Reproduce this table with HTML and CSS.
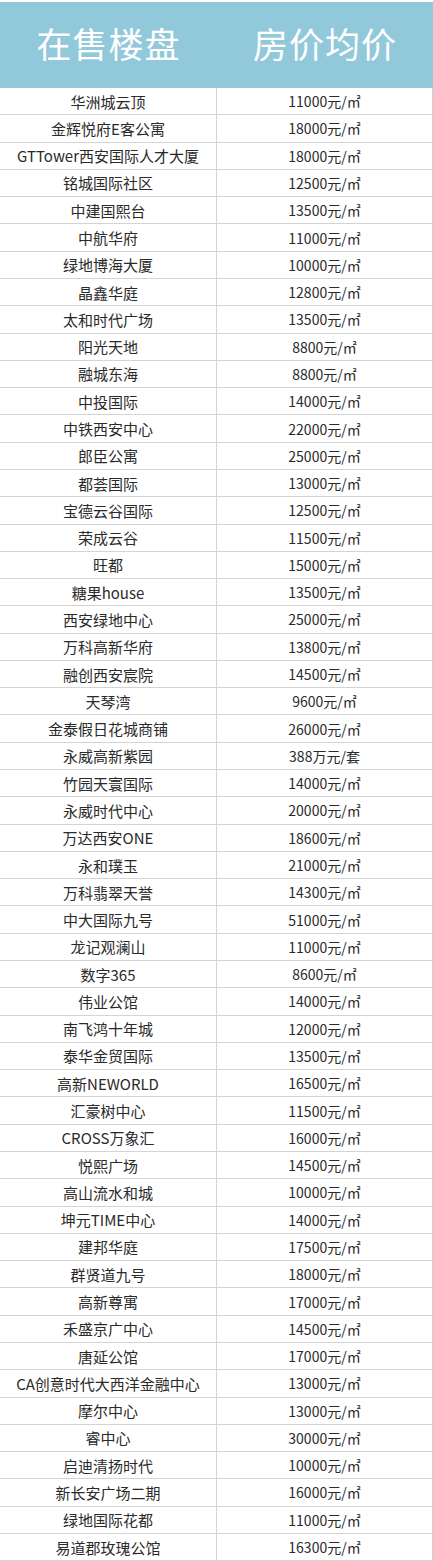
FILE: index.html
```html
<!DOCTYPE html>
<html lang="zh-CN">
<head>
<meta charset="utf-8">
<title>在售楼盘 房价均价</title>
<link rel="stylesheet" href="styles.css">
</head>
<body>
<div class="sheet">
  <div class="head">
    <div class="hcell">在售楼盘</div>
    <div class="hcell">房价均价</div>
  </div>
  <div class="rows">
    <div class="row"><div class="name">华洲城云顶</div><div class="price">11000元/㎡</div></div>
    <div class="row"><div class="name">金辉悦府E客公寓</div><div class="price">18000元/㎡</div></div>
    <div class="row"><div class="name">GTTower西安国际人才大厦</div><div class="price">18000元/㎡</div></div>
    <div class="row"><div class="name">铭城国际社区</div><div class="price">12500元/㎡</div></div>
    <div class="row"><div class="name">中建国熙台</div><div class="price">13500元/㎡</div></div>
    <div class="row"><div class="name">中航华府</div><div class="price">11000元/㎡</div></div>
    <div class="row"><div class="name">绿地博海大厦</div><div class="price">10000元/㎡</div></div>
    <div class="row"><div class="name">晶鑫华庭</div><div class="price">12800元/㎡</div></div>
    <div class="row"><div class="name">太和时代广场</div><div class="price">13500元/㎡</div></div>
    <div class="row"><div class="name">阳光天地</div><div class="price">8800元/㎡</div></div>
    <div class="row"><div class="name">融城东海</div><div class="price">8800元/㎡</div></div>
    <div class="row"><div class="name">中投国际</div><div class="price">14000元/㎡</div></div>
    <div class="row"><div class="name">中铁西安中心</div><div class="price">22000元/㎡</div></div>
    <div class="row"><div class="name">郎臣公寓</div><div class="price">25000元/㎡</div></div>
    <div class="row"><div class="name">都荟国际</div><div class="price">13000元/㎡</div></div>
    <div class="row"><div class="name">宝德云谷国际</div><div class="price">12500元/㎡</div></div>
    <div class="row"><div class="name">荣成云谷</div><div class="price">11500元/㎡</div></div>
    <div class="row"><div class="name">旺都</div><div class="price">15000元/㎡</div></div>
    <div class="row"><div class="name">糖果house</div><div class="price">13500元/㎡</div></div>
    <div class="row"><div class="name">西安绿地中心</div><div class="price">25000元/㎡</div></div>
    <div class="row"><div class="name">万科高新华府</div><div class="price">13800元/㎡</div></div>
    <div class="row"><div class="name">融创西安宸院</div><div class="price">14500元/㎡</div></div>
    <div class="row"><div class="name">天琴湾</div><div class="price">9600元/㎡</div></div>
    <div class="row"><div class="name">金泰假日花城商铺</div><div class="price">26000元/㎡</div></div>
    <div class="row"><div class="name">永威高新紫园</div><div class="price">388万元/套</div></div>
    <div class="row"><div class="name">竹园天寰国际</div><div class="price">14000元/㎡</div></div>
    <div class="row"><div class="name">永威时代中心</div><div class="price">20000元/㎡</div></div>
    <div class="row"><div class="name">万达西安ONE</div><div class="price">18600元/㎡</div></div>
    <div class="row"><div class="name">永和璞玉</div><div class="price">21000元/㎡</div></div>
    <div class="row"><div class="name">万科翡翠天誉</div><div class="price">14300元/㎡</div></div>
    <div class="row"><div class="name">中大国际九号</div><div class="price">51000元/㎡</div></div>
    <div class="row"><div class="name">龙记观澜山</div><div class="price">11000元/㎡</div></div>
    <div class="row"><div class="name">数字365</div><div class="price">8600元/㎡</div></div>
    <div class="row"><div class="name">伟业公馆</div><div class="price">14000元/㎡</div></div>
    <div class="row"><div class="name">南飞鸿十年城</div><div class="price">12000元/㎡</div></div>
    <div class="row"><div class="name">泰华金贸国际</div><div class="price">13500元/㎡</div></div>
    <div class="row"><div class="name">高新NEWORLD</div><div class="price">16500元/㎡</div></div>
    <div class="row"><div class="name">汇豪树中心</div><div class="price">11500元/㎡</div></div>
    <div class="row"><div class="name">CROSS万象汇</div><div class="price">16000元/㎡</div></div>
    <div class="row"><div class="name">悦熙广场</div><div class="price">14500元/㎡</div></div>
    <div class="row"><div class="name">高山流水和城</div><div class="price">10000元/㎡</div></div>
    <div class="row"><div class="name">坤元TIME中心</div><div class="price">14000元/㎡</div></div>
    <div class="row"><div class="name">建邦华庭</div><div class="price">17500元/㎡</div></div>
    <div class="row"><div class="name">群贤道九号</div><div class="price">18000元/㎡</div></div>
    <div class="row"><div class="name">高新尊寓</div><div class="price">17000元/㎡</div></div>
    <div class="row"><div class="name">禾盛京广中心</div><div class="price">14500元/㎡</div></div>
    <div class="row"><div class="name">唐延公馆</div><div class="price">17000元/㎡</div></div>
    <div class="row"><div class="name">CA创意时代大西洋金融中心</div><div class="price">13000元/㎡</div></div>
    <div class="row"><div class="name">摩尔中心</div><div class="price">13000元/㎡</div></div>
    <div class="row"><div class="name">睿中心</div><div class="price">30000元/㎡</div></div>
    <div class="row"><div class="name">启迪清扬时代</div><div class="price">10000元/㎡</div></div>
    <div class="row"><div class="name">新长安广场二期</div><div class="price">16000元/㎡</div></div>
    <div class="row"><div class="name">绿地国际花都</div><div class="price">11000元/㎡</div></div>
    <div class="row"><div class="name">易道郡玫瑰公馆</div><div class="price">16300元/㎡</div></div>
  </div>
</div>
</body>
</html>
```
FILE: styles.css
```css
html, body {
  margin: 0;
  padding: 0;
  background: #ffffff;
}
.sheet {
  width: 433px;
  height: 1561px;
  display: flex;
  flex-direction: column;
  font-family: "Noto Sans CJK SC", "DejaVu Sans", sans-serif;
}
.head {
  height: 86px;
  margin-top: 2px;
  background: #92c9da;
  display: grid;
  grid-template-columns: 217px 1fr;
  align-items: center;
  flex: none;
}
.hcell {
  color: #ffffff;
  font-size: 35px;
  text-align: center;
  letter-spacing: 1px;
  padding-bottom: 6px;
}
.rows {
  flex: 1;
  display: flex;
  flex-direction: column;
}
.row {
  flex: 1;
  display: grid;
  grid-template-columns: 217px 1fr;
  border-bottom: 1px solid #d4d4d4;
  border-right: 1px solid #cfcfcf;
}
.name, .price {
  display: flex;
  align-items: center;
  justify-content: center;
  font-size: 15px;
  color: #2a2a2a;
  white-space: nowrap;
}
.name {
  border-right: 1px solid #d4d4d4;
}
.price {
  font-size: 14px;
}
```
